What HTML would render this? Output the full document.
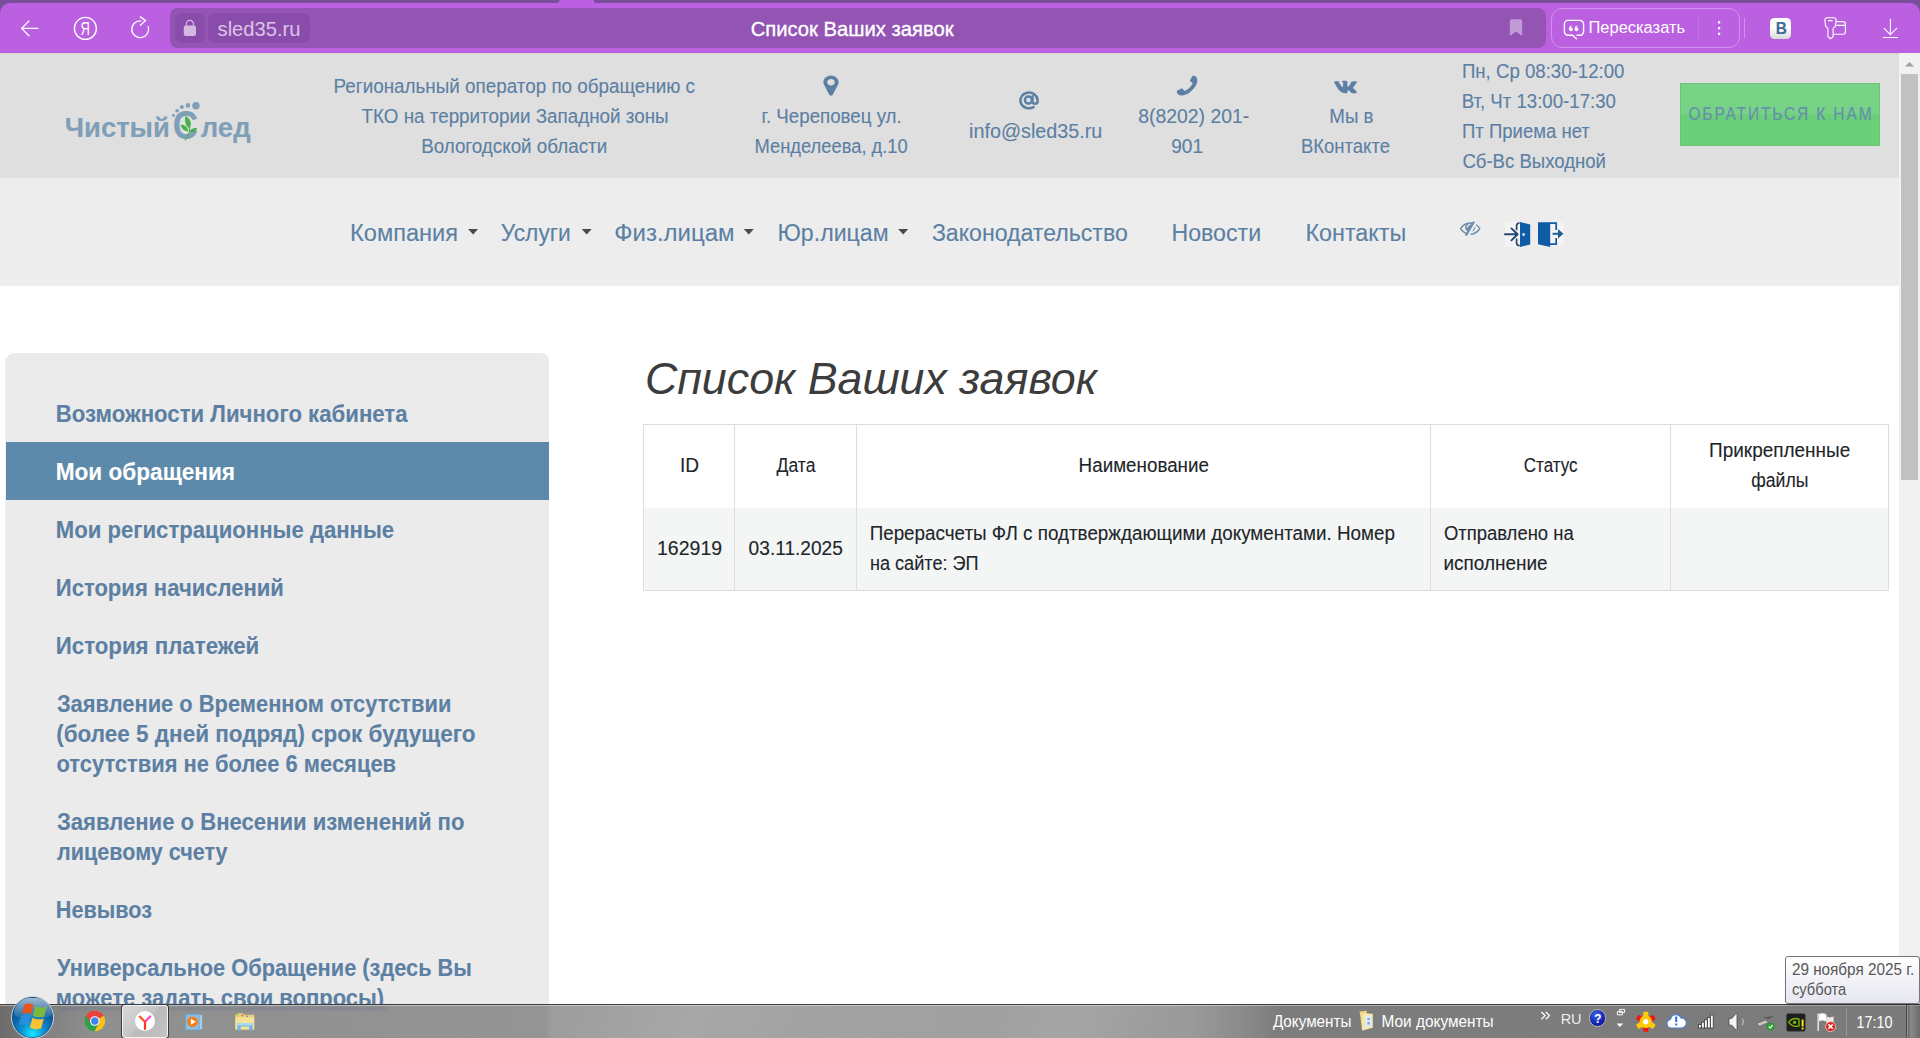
<!DOCTYPE html>
<html lang="ru"><head><meta charset="utf-8"><title>Список Ваших заявок</title>
<style>
*{box-sizing:border-box;margin:0;padding:0}
html,body{width:1920px;height:1038px;overflow:hidden;background:#fff}
body{position:relative;font-family:"Liberation Sans",sans-serif;-webkit-font-smoothing:antialiased}
.t{position:absolute;-webkit-text-stroke:.12px currentColor;white-space:nowrap;line-height:1;transform-origin:0 50%;display:block;font-weight:400;text-decoration:none}
.a{position:absolute;display:block}
svg.a{overflow:visible}
table{border-collapse:collapse}
ul{list-style:none}
</style></head>
<body>
<div class="a" style="left:0;top:0;width:1920px;height:53px;background:#7b4e9b">
<div class="a" style="left:0px;top:3px;width:1920px;height:50px;background:#ba60e1;border-radius:10px 10px 0 0"></div>
<svg class="a" style="left:550px;top:0px;" width="54" height="4" viewBox="550 0 54 4"><path fill="#ba60e1" d="M555 4 Q559 4 559.5 0 L593.5 0 Q594 4 598 4 Z M554 3h45v1h-45z"/></svg>
<div class="a" style="left:170px;top:8px;width:1376px;height:40px;background:#9354b4;border-radius:8px"></div>
<div class="a" style="left:175px;top:13px;width:30px;height:30px;background:#8a4cab;border-radius:7px"></div>
<div class="a" style="left:208px;top:13px;width:101.5px;height:30px;background:#8a4cab;border-radius:8px"></div>
<svg class="a" style="left:16px;top:16px;" width="28" height="26" viewBox="16 16 28 26"><path d="M29 21 L21.6 28.4 L29 35.8 M21.6 28.4 H38" fill="none" stroke="#fff" stroke-width="1.3" stroke-linecap="round" stroke-linejoin="round"/></svg>
<svg class="a" style="left:72px;top:15px;" width="28" height="28" viewBox="72 15 28 28"><circle cx="85.4" cy="28.4" r="11" fill="none" stroke="#fff" stroke-width="1.3"/></svg>
<span class="t" id="c_ya" style="left:80px;top:20px;font-size:18.20px;color:#fff;transform:translateX(0.55px) scaleX(0.7135);-webkit-text-stroke:0;">Я</span>
<svg class="a" style="left:128px;top:14px;" width="26" height="28" viewBox="128 14 26 28"><path d="M140.8 20.8 A8.4 8.4 0 1 0 148.2 26.6" fill="none" stroke="#fff" stroke-width="1.3" stroke-linecap="round"/><path d="M140.3 16.9 L145.6 20.6 L140.3 25.3" fill="none" stroke="#fff" stroke-width="1.3" stroke-linecap="round" stroke-linejoin="round"/></svg>
<svg class="a" style="left:180px;top:17px;" width="20" height="23" viewBox="180 17 20 23"><path d="M186.3 26 V24 a3.6 3.6 0 0 1 7.2 0 V26" fill="none" stroke="#d4b9e2" stroke-width="1.2"/><rect x="183.8" y="25.6" width="12.2" height="10.4" rx="2" fill="#d4b9e2"/></svg>
<span class="t" id="c_url" style="left:217px;top:19px;font-size:20.40px;color:#dcc4e8;transform:translateX(0.56px) scaleX(0.9882);-webkit-text-stroke:0;">sled35.ru</span>
<span class="t" id="c_title" style="left:750px;top:19px;font-size:20.80px;color:#fff;transform:translateX(0.69px) scaleX(0.9719);-webkit-text-stroke:.35px #fff;">Список Ваших заявок</span>
<svg class="a" style="left:1508px;top:18px;" width="16" height="20" viewBox="1508 18 16 20"><path d="M1509.8 21.2 a2 2 0 0 1 2 -2 h8.4 a2 2 0 0 1 2 2 V36.1 l-6.2 -4.6 l-6.2 4.6 Z" fill="#c19bd8"/></svg>
<div class="a" style="left:1551px;top:8px;width:188.5px;height:39.5px;background:transparent;border:1px solid rgba(255,255,255,.32);border-radius:11px"></div>
<svg class="a" style="left:1562px;top:18px;" width="24" height="23" viewBox="1562 18 24 23"><path d="M1568 20.4 h12 a3.6 3.6 0 0 1 3.6 3.6 v7.6 a3.6 3.6 0 0 1 -3.6 3.6 h-3 M1573 35.2 h-5 a3.6 3.6 0 0 1 -3.6 -3.6 v-7.6 a3.6 3.6 0 0 1 3.6 -3.6 M1572.6 35.2 l3.8 3.6" fill="none" stroke="#fff" stroke-width="1.4" stroke-linecap="round"/><path d="M1569 29.4 q0 -3.6 3.2 -4.2 q-1.2 1 -1.2 2.2 a1.9 1.9 0 1 1 -2 2 Z M1574.6 29.4 q0 -3.6 3.2 -4.2 q-1.2 1 -1.2 2.2 a1.9 1.9 0 1 1 -2 2 Z" fill="#fff"/></svg>
<span class="t" id="c_retell" style="left:1588px;top:20px;font-size:16.80px;color:#fff;transform:translateX(0.47px) scaleX(0.9818);-webkit-text-stroke:0;">Пересказать</span>
<div class="a" style="left:1697.5px;top:17px;width:1px;height:22px;background:rgba(255,255,255,.14);"></div>
<svg class="a" style="left:1716px;top:20px;" width="6" height="17" viewBox="1716 20 6 17"><path d="M1718 21.2h2.2v2.2h-2.2z M1718 27h2.2v2.2h-2.2z M1718 32.8h2.2v2.2h-2.2z" fill="#fff"/></svg>
<div class="a" style="left:1744.2px;top:18px;width:1px;height:20px;background:rgba(255,255,255,.3);"></div>
<div class="a" style="left:1770px;top:18px;width:21px;height:21px;background:linear-gradient(#fff 45%,#d9d9d9);border-radius:4.5px"></div>
<span class="t" id="c_vk" style="left:1775px;top:20px;font-size:16.40px;color:#3d6898;font-weight:700;transform:translateX(0.63px) scaleX(0.9366);">В</span>
<svg class="a" style="left:1822px;top:15px;" width="26" height="26" viewBox="1822 15 26 26"><path d="M1826.4 17.8 h7.6 a2.2 2.2 0 0 1 2.2 2.4 l-0.9 6.2 l-2.2 2 v8.4 l-2.6 2 l-2.6 -2 v-8.4 l-2.2 -2 l-0.9 -6.2 a2.2 2.2 0 0 1 2.2 -2.4 Z M1828 20.6 h4.6 M1836.6 21.6 h6.4 a2.4 2.4 0 0 1 2.4 2.4 v7.8 a2.4 2.4 0 0 1 -2.4 2.4 h-9.6 M1836.4 25.4 h9" fill="none" stroke="#fff" stroke-width="1.1" stroke-linejoin="round"/></svg>
<svg class="a" style="left:1880px;top:17px;" width="20" height="23" viewBox="1880 17 20 23"><path d="M1890.4 19.4 V34.4 M1884.2 28.4 l6.2 6.2 l6.2 -6.2 M1883.2 37.5 H1897.6" fill="none" stroke="#fff" stroke-width="1.1" stroke-linecap="round" stroke-linejoin="round"/></svg>
</div>
<header>
<div class="a" style="left:0px;top:53px;width:1899px;height:125px;background:#dfdfdf;"></div>
<div class="a" style="left:0px;top:53px;width:1899px;height:1px;background:#d6d8d3;"></div>
<a class="logo">
<span class="t" id="lg1" style="left:64px;top:115px;font-size:27.00px;color:#7f9eb8;font-weight:700;transform:translateX(0.77px) scaleX(1.0163);">Чистый</span>
<span class="t" id="lg2" style="left:172px;top:105px;font-size:41.00px;color:#7f9eb8;font-weight:700;transform:translateX(0.82px) scaleX(0.8554);">С</span>
<span class="t" id="lg3" style="left:200px;top:115px;font-size:27.00px;color:#7f9eb8;font-weight:700;transform:translateX(0.69px) scaleX(1.0202);">лед</span>
<svg class="a" style="left:170px;top:100px;" width="32" height="42" viewBox="170 100 32 42"><g fill="#7f9eb8"><circle cx="173.5" cy="115.2" r="1.5"/><circle cx="177.1" cy="110.8" r="1.8"/><circle cx="181.9" cy="107.1" r="2"/><circle cx="187.9" cy="105.4" r="2.3"/><circle cx="195.9" cy="105.7" r="3.7"/></g><g fill="#45b04c"><path d="M185.3 116.2 C190.6 118 192.2 123.6 189.6 128.6 C185.6 126.2 184.4 121 185.3 116.2 Z"/><path d="M180.6 124.8 C184.4 124.4 187.8 126.8 188.4 131.2 C184.6 131.4 181.6 128.8 180.6 124.8 Z"/><path d="M197.2 128.2 C195.6 131.6 192.2 132.8 189.4 132.2 C190.6 129 193.8 127.6 197.2 128.2 Z"/><path d="M189.2 127.6 C189.4 132 187.4 136.4 184.4 140.2 L185.4 140.6 C188.6 136.8 190.4 132.2 190.2 127.6 Z"/></g></svg>
</a>
<p>
<span class="t" id="h1a" style="left:333px;top:77px;font-size:19.40px;color:#5c80a3;transform:translateX(0.59px) scaleX(0.9716);">Региональный оператор по обращению с</span>
<span class="t" id="h1b" style="left:361px;top:107px;font-size:19.40px;color:#5c80a3;transform:translateX(0.57px) scaleX(0.9706);">ТКО на территории Западной зоны</span>
<span class="t" id="h1c" style="left:421px;top:137px;font-size:19.40px;color:#5c80a3;transform:translateX(0.14px) scaleX(0.9696);">Вологодской области</span>
</p>
<svg class="a" style="left:822px;top:75px;" width="18" height="21" viewBox="822 75 18 21"><path fill="#5c80a3" d="M834.8 82.27C834.8 84.1 833.09 85.6 831 85.6C828.91 85.6 827.2 84.1 827.2 82.27C827.2 80.43 828.91 78.93 831 78.93C833.09 78.93 834.8 80.43 834.8 82.27ZM838.6 82.27C838.6 78.58 835.2 75.6 831 75.6C826.8 75.6 823.4 78.58 823.4 82.27C823.4 83.06 823.5 83.88 823.89 84.6L829.31 94.68C829.6 95.25 830.29 95.6 831 95.6C831.71 95.6 832.4 95.25 832.71 94.68L838.11 84.6C838.5 83.88 838.6 83.06 838.6 82.27Z"/></svg>
<span class="t" id="h2a" style="left:761px;top:107px;font-size:19.40px;color:#5c80a3;transform:translateX(0.40px) scaleX(0.9654);">г. Череповец ул.</span>
<span class="t" id="h2b" style="left:754px;top:137px;font-size:19.40px;color:#5c80a3;transform:translateX(0.49px) scaleX(0.9455);">Менделеева, д.10</span>
<svg class="a" style="left:1018px;top:90px;" width="22" height="21" viewBox="1018 90 22 21"><g fill="none" stroke="#5c80a3" stroke-width="2.5" stroke-linecap="round"><path d="M1033.6 107.1 A8.6 7.9 0 1 1 1037.6 100.1 V101.3 A2.55 2.55 0 0 1 1032.5 101.3 V96.3"/><circle cx="1028.4" cy="100.1" r="3.5"/></g></svg>
<span class="t" id="h3" style="left:969px;top:122px;font-size:19.40px;color:#5c80a3;transform:translateX(0.07px) scaleX(1.0193);">info@sled35.ru</span>
<svg class="a" style="left:1176px;top:75px;" width="22" height="21" viewBox="1176 75 22 21"><path fill="#5c80a3" d="M1176.8 91.4C1176.8 91.3 1176.8 91.2 1176.84 91.1C1176.95 90.8 1177.66 90.49 1177.96 90.34C1178.79 89.89 1179.64 89.45 1180.46 88.98C1180.84 88.75 1181.31 88.33 1181.76 88.33C1182.65 88.33 1183.95 90.9 1184.74 90.9C1185.14 90.9 1185.65 90.54 1186 90.34C1188.67 88.91 1190.51 87.12 1191.99 84.53C1192.19 84.19 1192.56 83.7 1192.56 83.31C1192.56 82.55 1189.91 81.28 1189.91 80.42C1189.91 79.97 1190.35 79.52 1190.58 79.15C1191.06 78.36 1191.52 77.53 1191.99 76.72C1192.13 76.44 1192.45 75.74 1192.76 75.64C1192.86 75.6 1192.97 75.6 1193.07 75.6C1193.6 75.6 1194.62 75.83 1195.1 76.04C1195.82 76.34 1196.29 77.13 1196.65 77.77C1197.12 78.61 1197.4 79.46 1197.4 80.42C1197.4 81.74 1196.84 82.93 1196.39 84.14C1196.07 85 1195.67 85.84 1195.18 86.62C1193.64 89.04 1190.64 91.95 1188.15 93.44C1187.35 93.92 1186.49 94.31 1185.59 94.62C1184.35 95.06 1183.12 95.6 1181.76 95.6C1180.78 95.6 1179.9 95.33 1179.04 94.88C1178.38 94.52 1177.56 94.07 1177.25 93.37C1177.03 92.9 1176.8 91.91 1176.8 91.4Z"/></svg>
<span class="t" id="h4a" style="left:1138px;top:107px;font-size:19.40px;color:#5c80a3;transform:translateX(0.15px) scaleX(1.0001);">8(8202) 201-</span>
<span class="t" id="h4b" style="left:1171px;top:137px;font-size:19.40px;color:#5c80a3;transform:translateX(0.14px) scaleX(0.9867);">901</span>
<svg class="a" style="left:1334px;top:80px;" width="23" height="14" viewBox="1334 80 23 14"><path fill="#5c80a3" d="M1356.77 81.7C1356.77 81.7 1356.6 81.24 1355.58 81.37L1352.19 81.39C1351.93 81.36 1351.74 81.46 1351.74 81.46C1351.74 81.46 1351.54 81.56 1351.45 81.81C1350.9 83.18 1350.19 84.36 1350.19 84.36C1348.68 86.82 1348.07 86.96 1347.83 86.8C1347.25 86.45 1347.4 85.37 1347.4 84.6C1347.4 82.21 1347.78 81.21 1346.66 80.95C1346.3 80.87 1346.03 80.81 1345.07 80.8C1343.86 80.79 1342.84 80.8 1342.26 81.07C1341.87 81.26 1341.58 81.66 1341.75 81.69C1341.98 81.72 1342.48 81.82 1342.75 82.17C1342.75 82.17 1343.05 82.64 1343.1 83.65C1343.22 86.47 1342.62 86.82 1342.62 86.82C1342.17 87.06 1341.37 86.66 1340.19 84.33C1340.19 84.33 1339.51 83.18 1338.98 81.91C1338.88 81.67 1338.69 81.55 1338.69 81.55C1338.69 81.55 1338.48 81.39 1338.18 81.35L1334.95 81.37C1334.46 81.37 1334.28 81.58 1334.28 81.58C1334.28 81.58 1334.11 81.76 1334.27 82.14C1336.79 87.83 1339.66 90.68 1339.66 90.68C1339.66 90.68 1342.28 93.32 1345.26 93.14H1346.61C1347.03 93.1 1347.24 92.89 1347.24 92.89C1347.24 92.89 1347.43 92.68 1347.41 92.31C1347.39 90.57 1348.24 90.31 1348.24 90.31C1349.06 90.06 1350.12 91.99 1351.25 92.74C1351.25 92.74 1352.11 93.31 1352.76 93.18L1355.77 93.14C1357.36 93.13 1356.6 91.86 1356.6 91.86C1356.54 91.76 1356.17 90.98 1354.36 89.36C1352.47 87.67 1352.72 87.94 1355 85.02C1356.39 83.25 1356.94 82.16 1356.77 81.7Z"/></svg>
<span class="t" id="h5a" style="left:1329px;top:107px;font-size:19.40px;color:#5c80a3;transform:translateX(0.35px) scaleX(0.9659);">Мы в</span>
<span class="t" id="h5b" style="left:1300px;top:137px;font-size:19.40px;color:#5c80a3;transform:translateX(0.90px) scaleX(0.9542);">ВКонтакте</span>
<span class="t" id="h6a" style="left:1461px;top:62px;font-size:19.40px;color:#5c80a3;transform:translateX(0.91px) scaleX(0.9612);">Пн, Ср 08:30-12:00</span>
<span class="t" id="h6b" style="left:1461px;top:92px;font-size:19.40px;color:#5c80a3;transform:translateX(0.66px) scaleX(0.9612);">Вт, Чт 13:00-17:30</span>
<span class="t" id="h6c" style="left:1461px;top:122px;font-size:19.40px;color:#5c80a3;transform:translateX(0.91px) scaleX(0.9564);">Пт Приема нет</span>
<span class="t" id="h6d" style="left:1462px;top:152px;font-size:19.40px;color:#5c80a3;transform:translateX(0.38px) scaleX(0.9578);">Сб-Вс Выходной</span>
<div class="a" style="left:1680px;top:83px;width:200px;height:63px;background:linear-gradient(#78d387 0,#76d285 49%,#6bce79 51%,#6ccf7a 100%);border:1px solid #66c873"></div>
<a class="t" id="btn" style="left:1688px;top:105px;font-size:18.60px;color:#648fae;letter-spacing:2.20px;transform:translateX(0.43px) scaleX(0.8364);">ОБРАТИТЬСЯ К НАМ</a>
</header>
<nav>
<div class="a" style="left:0px;top:178px;width:1899px;height:108px;background:#ededed;"></div>
<a class="t" id="n1" style="left:350px;top:221px;font-size:24.83px;color:#5c80a3;transform:translateX(0.04px) scaleX(0.9507);">Компания</a>
<a class="t" id="n2" style="left:500px;top:221px;font-size:24.83px;color:#5c80a3;transform:translateX(0.70px) scaleX(0.9189);">Услуги</a>
<a class="t" id="n3" style="left:614px;top:221px;font-size:24.83px;color:#5c80a3;transform:translateX(0.24px) scaleX(0.9663);">Физ.лицам</a>
<a class="t" id="n4" style="left:777px;top:221px;font-size:24.83px;color:#5c80a3;transform:translateX(0.50px) scaleX(0.9317);">Юр.лицам</a>
<a class="t" id="n5" style="left:931px;top:221px;font-size:24.83px;color:#5c80a3;transform:translateX(0.91px) scaleX(0.9306);">Законодательство</a>
<a class="t" id="n6" style="left:1171px;top:221px;font-size:24.83px;color:#5c80a3;transform:translateX(0.47px) scaleX(0.9325);">Новости</a>
<a class="t" id="n7" style="left:1305px;top:221px;font-size:24.83px;color:#5c80a3;transform:translateX(0.43px) scaleX(0.9396);">Контакты</a>
<svg class="a" style="left:460px;top:225px;" width="452" height="13" viewBox="460 225 452 13"><g fill="#4a4a4a"><path d="M468.1 229.1 h10 l-5 5.3 z"/><path d="M581.7 229.1 h10 l-5 5.3 z"/><path d="M743.8 229.1 h10 l-5 5.3 z"/><path d="M898.2 229.1 h10 l-5 5.3 z"/></g></svg>
<svg class="a" style="left:1459px;top:220px;" width="23" height="18" viewBox="1459 220 23 18"><path fill="#5c80a3" opacity="0.88" d="M1466.32 232.73C1464.31 231.86 1462.64 230.37 1461.46 228.6C1462.54 226.98 1464.02 225.59 1465.79 224.71C1465.34 225.46 1465.1 226.32 1465.1 227.19C1465.1 228.77 1465.89 230.25 1467.21 231.18ZM1470.75 224.37C1470.75 224.66 1470.5 224.9 1470.2 224.9C1468.9 224.9 1467.83 225.92 1467.83 227.19C1467.83 227.48 1467.58 227.72 1467.29 227.72C1466.99 227.72 1466.74 227.48 1466.74 227.19C1466.74 225.35 1468.3 223.84 1470.2 223.84C1470.5 223.84 1470.75 224.09 1470.75 224.37ZM1474.88 222.27C1474.88 222.15 1474.81 222.04 1474.7 221.97C1474.46 221.84 1473.39 221.2 1473.18 221.2C1473.05 221.2 1472.93 221.27 1472.86 221.38L1472.25 222.44C1471.58 222.32 1470.88 222.26 1470.2 222.26C1466 222.26 1462.48 224.49 1460.23 227.84C1460.08 228.06 1460 228.34 1460 228.6C1460 228.88 1460.08 229.14 1460.23 229.36C1461.54 231.34 1463.39 232.99 1465.6 233.96C1465.49 234.15 1465.1 234.74 1465.1 234.92C1465.1 235.05 1465.17 235.16 1465.28 235.23C1465.52 235.36 1466.6 236 1466.81 236C1466.93 236 1467.06 235.93 1467.13 235.82L1467.68 234.84C1470.09 230.69 1472.47 226.52 1474.87 222.37C1474.88 222.35 1474.88 222.29 1474.88 222.27ZM1475.3 227.19C1475.3 226.88 1475.27 226.57 1475.21 226.27L1472.02 231.79C1473.99 231.07 1475.3 229.24 1475.3 227.19ZM1480.4 228.6C1480.4 228.31 1480.32 228.08 1480.17 227.84C1479.28 226.42 1477.86 225.04 1476.45 224.13L1475.73 225.36C1477.02 226.22 1478.1 227.33 1478.94 228.6C1477.17 231.26 1474.36 233.21 1471.04 233.49L1470.2 234.94C1473.63 234.94 1476.7 233.43 1478.93 230.96C1479.38 230.46 1479.82 229.92 1480.17 229.36C1480.32 229.12 1480.4 228.89 1480.4 228.6Z"/></svg>
<svg class="a" style="left:1503px;top:220px;" width="63" height="29" viewBox="1503 220 63 29"><rect x="1505" y="222" width="16" height="25" fill="#fff" opacity=".4"/><rect x="1549" y="222.4" width="14.4" height="23.6" fill="#fff" opacity=".4"/><path d="M1505 234.3 H1517.4 M1511.4 228.4 L1517.6 234.3 L1511.4 240.4" fill="none" stroke="#24476f" stroke-width="1.9" stroke-linejoin="round" stroke-linecap="round"/><path d="M1519 223 q-2.6 0.4 -2.4 3 v3.4 M1516.6 239.2 v3.4 q-0.2 2.6 2.4 3" fill="none" stroke="#24476f" stroke-width="1.7" stroke-linecap="round"/><path d="M1520 222 L1530.2 224.6 V244.4 L1520 247 Z" fill="#0f5ba6"/><rect x="1522.4" y="233.2" width="2.4" height="2.6" fill="#cfe6fa"/><path d="M1538 222.2 L1550.2 222.2 L1550.2 247 L1538 244.2 Z" fill="#0f5ba6"/><path d="M1550 223.2 H1556.2 V230 M1556.2 238 V244.2 H1550" fill="none" stroke="#0f5ba6" stroke-width="1.7"/><path d="M1552.6 233.8 H1559" stroke="#1d5f96" stroke-width="2" fill="none"/><path d="M1558 229 L1563.4 233.8 L1558 238.6 Z" fill="#1d5f96"/></svg>
</nav>
<aside>
<div class="a" style="left:5px;top:358px;width:1px;height:646px;background:#f3f3f4;"></div>
<div class="a" style="left:6px;top:353px;width:543px;height:707px;background:#ebebeb;border-radius:8px"></div>
<div class="a" style="left:6px;top:442px;width:543px;height:58px;background:#5d8aab;"></div>
<ul>
<li><a class="t" id="s1" style="left:55px;top:402px;font-size:24.83px;color:#5c80a3;font-weight:700;transform:translateX(0.78px) scaleX(0.8939);">Возможности Личного кабинета</a>
<li><a class="t" id="s2" style="left:55px;top:460px;font-size:24.83px;color:#fff;font-weight:700;transform:translateX(0.76px) scaleX(0.9097);">Мои обращения</a>
<li><a class="t" id="s3" style="left:55px;top:518px;font-size:24.83px;color:#5c80a3;font-weight:700;transform:translateX(0.78px) scaleX(0.8912);">Мои регистрационные данные</a>
<li><a class="t" id="s4" style="left:55px;top:576px;font-size:24.83px;color:#5c80a3;font-weight:700;transform:translateX(0.79px) scaleX(0.8879);">История начислений</a>
<li><a class="t" id="s5" style="left:55px;top:634px;font-size:24.83px;color:#5c80a3;font-weight:700;transform:translateX(0.77px) scaleX(0.8963);">История платежей</a>
<li><a class="t" id="s6a" style="left:56px;top:692px;font-size:24.83px;color:#5c80a3;font-weight:700;transform:translateX(0.91px) scaleX(0.8808);">Заявление о Временном отсутствии</a>
<a class="t" id="s6b" style="left:56px;top:722px;font-size:24.83px;color:#5c80a3;font-weight:700;transform:translateX(0.23px) scaleX(0.9058);">(более 5 дней подряд) срок будущего</a>
<a class="t" id="s6c" style="left:56px;top:752px;font-size:24.83px;color:#5c80a3;font-weight:700;transform:translateX(0.47px) scaleX(0.8826);">отсутствия не более 6 месяцев</a>
<li><a class="t" id="s7a" style="left:56px;top:810px;font-size:24.83px;color:#5c80a3;font-weight:700;transform:translateX(0.90px) scaleX(0.8897);">Заявление о Внесении изменений по</a>
<a class="t" id="s7b" style="left:57px;top:840px;font-size:24.83px;color:#5c80a3;font-weight:700;transform:translateX(0.12px) scaleX(0.8681);">лицевому счету</a>
<li><a class="t" id="s8" style="left:55px;top:898px;font-size:24.83px;color:#5c80a3;font-weight:700;transform:translateX(0.82px) scaleX(0.8718);">Невывоз</a>
<li><a class="t" id="s9a" style="left:57px;top:956px;font-size:24.83px;color:#5c80a3;font-weight:700;transform:translateX(0.09px) scaleX(0.8775);">Универсальное Обращение (здесь Вы</a>
<a class="t" id="s9b" style="left:55px;top:986px;font-size:24.83px;color:#5c80a3;font-weight:700;transform:translateX(0.80px) scaleX(0.8859);">можете задать свои вопросы)</a>
</ul></aside>
<main>
<h1 class="t" id="ttl" style="left:644px;top:357px;font-size:44.00px;color:#3c3c3c;font-style:italic;transform:translateX(0.90px) scaleX(1.0175);-webkit-text-stroke:0;">Список Ваших заявок</h1>
<div class="a" style="left:643px;top:424px;width:1246px;height:167px;background:#fff;border:1px solid #dddddd"></div>
<div class="a" style="left:644px;top:508px;width:1244px;height:82px;background:#f4f6f6;"></div>
<div class="a" style="left:734px;top:424px;width:1px;height:167px;background:#dddddd;"></div>
<div class="a" style="left:856px;top:424px;width:1px;height:167px;background:#dddddd;"></div>
<div class="a" style="left:1430px;top:424px;width:1px;height:167px;background:#dddddd;"></div>
<div class="a" style="left:1670px;top:424px;width:1px;height:167px;background:#dddddd;"></div>
<table><thead><tr>
<th><span class="t" id="th1" style="left:679px;top:456px;font-size:19.40px;color:#212529;transform:translateX(0.91px) scaleX(0.9851);">ID</span></th>
<th><span class="t" id="th2" style="left:776px;top:456px;font-size:19.40px;color:#212529;transform:translateX(0.56px) scaleX(0.9056);">Дата</span></th>
<th><span class="t" id="th3" style="left:1078px;top:456px;font-size:19.40px;color:#212529;transform:translateX(0.59px) scaleX(0.9700);">Наименование</span></th>
<th><span class="t" id="th4" style="left:1523px;top:456px;font-size:19.40px;color:#212529;transform:translateX(0.81px) scaleX(0.8759);">Статус</span></th>
<th><span class="t" id="th5a" style="left:1709px;top:441px;font-size:19.40px;color:#212529;transform:translateX(0.07px) scaleX(0.9778);">Прикрепленные</span><span class="t" id="th5b" style="left:1751px;top:471px;font-size:19.40px;color:#212529;transform:translateX(0.26px) scaleX(0.9093);">файлы</span></th>
</tr></thead><tbody><tr>
<td><span class="t" id="td1" style="left:656px;top:539px;font-size:19.40px;color:#212529;transform:translateX(0.99px) scaleX(1.0063);">162919</span></td>
<td><span class="t" id="td2" style="left:748px;top:539px;font-size:19.40px;color:#212529;transform:translateX(0.61px) scaleX(0.9860);">03.11.2025</span></td>
<td><span class="t" id="td3a" style="left:869px;top:524px;font-size:19.40px;color:#212529;transform:translateX(0.64px) scaleX(0.9712);">Перерасчеты ФЛ с подтверждающими документами. Номер</span><span class="t" id="td3b" style="left:869px;top:554px;font-size:19.40px;color:#212529;transform:translateX(0.93px) scaleX(0.9341);">на сайте: ЭП</span></td>
<td><span class="t" id="td4a" style="left:1443px;top:524px;font-size:19.40px;color:#212529;transform:translateX(0.89px) scaleX(0.9519);">Отправлено на</span><span class="t" id="td4b" style="left:1443px;top:554px;font-size:19.40px;color:#212529;transform:translateX(0.39px) scaleX(0.9783);">исполнение</span></td>
<td></td></tr></tbody></table>
</main>
<div class="a" style="left:1899px;top:53px;width:21px;height:951px;background:#f1f1f1;"></div>
<div class="a" style="left:1901px;top:74px;width:17px;height:405.5px;background:#c1c1c1;"></div>
<svg class="a" style="left:1904px;top:58px;" width="12" height="10" viewBox="1904 58 12 10"><path d="M1905 66.6 l4.5 -4.6 l4.5 4.6 z" fill="#a0a0a0"/></svg>
<footer>
<div class="a" style="left:0px;top:1004px;width:1920px;height:34px;background:linear-gradient(115deg,rgba(255,255,255,0) 0,rgba(255,255,255,0) 30%,rgba(255,255,255,.07) 36%,rgba(255,255,255,0) 42%,rgba(255,255,255,0) 52%,rgba(255,255,255,.06) 56%,rgba(255,255,255,0) 61%),linear-gradient(90deg,#6b6b6b 0,#7e7e7e 2%,#8f8f8f 5%,#949494 28.4%,#9e9e9e 28.8%,#a2a2a2 40%,#a0a0a0 55%,#9a9a9a 62%,#8c8c8c 64.5%,#7d7d7d 66.5%,#7b7b7b 100%);border-top:1px solid #3d3d3d;box-shadow:inset 0 1px 0 rgba(255,255,255,.42)"></div>
<div class="a" style="left:58px;top:1006.5px;width:328px;height:3px;background:rgba(60,85,120,.2);filter:blur(1.6px)"></div>
<div class="a" style="left:11.3px;top:995.5px;width:43.2px;height:43.2px;background:radial-gradient(circle at 50% 90%,#19e6ff 0,#0d8fd0 28%,#0b5a9c 58%,#0a4a84 100%);border-radius:50%;border:.8px solid #c9d3da;box-shadow:inset 0 0 0 .8px #0b4f8a"></div>
<div class="a" style="left:14.4px;top:997.6px;width:37.2px;height:20px;background:linear-gradient(rgba(255,255,255,.6),rgba(255,255,255,.08));border-radius:19px 19px 50% 50%/19px 19px 22% 22%"></div>
<svg class="a" style="left:10px;top:994px;" width="46" height="44" viewBox="10 994 46 44"><path d="M24.3 1004.6 q4.6 -2.4 9.2 0.2 l-2.2 9.4 q-4.6 -2.6 -9.2 -0.2 z" fill="#e8541c"/><path d="M35.4 1006.2 q5.2 2.6 11.4 0.4 l-2.6 9.8 q-5.6 2.2 -11.2 -0.6 z" fill="#7cb93c"/><path d="M21.4 1016 q4.6 -2.4 9.2 0.2 l-2.4 9.6 q-4.8 -2.6 -9.6 -0.2 z" fill="#2a90dc"/><path d="M32.4 1017.8 q5.4 2.8 11.4 0.6 l-2.6 9.8 q-5.6 2.2 -11.4 -0.8 z" fill="#fbc232"/></svg>
<svg class="a" style="left:84px;top:1010px;" width="22" height="22" viewBox="84 1010 22 22"><circle cx="94.8" cy="1021" r="10.2" fill="#fbc116"/><path d="M94.8 1021 L85.97 1015.9 A10.2 10.2 0 0 1 103.63 1015.9 Z" fill="#e9433a"/><path d="M94.8 1021 L103.63 1015.9 A10.2 10.2 0 0 1 94.8 1031.2 Z" fill="#fbc116"/><path d="M94.8 1021 L94.8 1031.2 A10.2 10.2 0 0 1 85.97 1015.9 Z" fill="#2ca24e"/><path d="M94.8 1016.2 H103.8 A10.2 10.2 0 0 0 85.97 1015.9 L90.6 1023.4 Z" fill="#e9433a"/><path d="M98.96 1023.4 L94.4 1031.2 A10.2 10.2 0 0 1 85.97 1015.9 L90.64 1023.4 Z" fill="#2ca24e"/><circle cx="94.8" cy="1021" r="4.8" fill="#fff"/><circle cx="94.8" cy="1021" r="3.7" fill="#3f82f0"/></svg>
<div class="a" style="left:122px;top:1005px;width:46.2px;height:32.5px;background:linear-gradient(135deg,#d8d8d8 0,#c6c6c6 45%,#bababa 55%,#c4c4c4 100%);border:1px solid #f4f4f4;border-radius:3px;box-shadow:0 0 0 1px #3a3a3a"></div>
<svg class="a" style="left:134px;top:1010px;" width="22" height="22" viewBox="134 1010 22 22"><circle cx="145" cy="1021" r="10" fill="#fff"/><path d="M145 1029 V1021.6" stroke="#ff3326" stroke-width="2.2" stroke-linecap="round" fill="none"/><path d="M145 1021.8 L139.8 1016.6" stroke="#ff5a1c" stroke-width="2.2" stroke-linecap="round" fill="none"/><path d="M145 1021.8 L150.2 1016.4" stroke="#ff4ac8" stroke-width="2.2" stroke-linecap="round" fill="none"/><circle cx="145" cy="1021.8" r="1.1" fill="#ff3c28"/></svg>
<svg class="a" style="left:185px;top:1013px;" width="19" height="18" viewBox="185 1013 19 18"><path d="M185.8 1014.4 h13.4 l3 1 v13.6 l-3 0.8 h-13.4 z" fill="#a5cdea"/><path d="M185.8 1014.4 h13.4 v15.4 h-13.4 z" fill="#8cbfe6" stroke="#5e9ed2" stroke-width=".7"/><circle cx="192.6" cy="1021.8" r="5.4" fill="#f57c14"/><path d="M190.9 1018.8 v6 l5 -3 z" fill="#fff"/></svg>
<svg class="a" style="left:234px;top:1012px;" width="22" height="20" viewBox="234 1012 22 20"><path d="M235.4 1015.2 l1 -2 h6.2 l1.6 1.6 h10 v14.6 h-18.8 z" fill="#e9cf78"/><path d="M235.4 1017.4 h18.8 v12 h-18.8 z" fill="#f5e299"/><rect x="236.6" y="1013.4" width="1.4" height="1.4" fill="#2ecc40"/><rect x="241.6" y="1014.8" width="1.4" height="1.4" fill="#e74c3c"/><rect x="246.6" y="1015.6" width="1.4" height="1.4" fill="#3498db"/><path d="M237.4 1024.4 q0 -1.4 1.4 -1.4 h12.4 q1.4 0 1.4 1.4 v6 h-3.4 v-4 h-8.4 v4 h-3.4 z" fill="#6fb7e6"/><path d="M237.4 1024.4 q0 -1.4 1.4 -1.4 h12.4 q1.4 0 1.4 1.4 v1.2 h-15.2 z" fill="#a9d9f5"/></svg>
<span class="t" id="tb1" style="left:1272px;top:1013px;font-size:16.20px;color:#fff;transform:translateX(0.88px) scaleX(0.9413);-webkit-text-stroke:0;">Документы</span>
<svg class="a" style="left:1358px;top:1010px;" width="17" height="21" viewBox="1358 1010 17 21"><path d="M1359.6 1011.4 l7 -0.6 l0.6 18.2 l-5 1.6 z" fill="#f0d77f"/><path d="M1362.2 1013 l10.6 0.8 l0 14 l-10.6 2.8 z" fill="#f7e7a6"/><path d="M1365 1015.4 l6.6 0.6 v10.6 l-6.6 1.6 z" fill="#dfeaf4"/><path d="M1367.4 1018 h2.4 v2 h-2.4z M1367.4 1022 h2.4 v2.4 h-2.4z" fill="#7aa7d6"/></svg>
<span class="t" id="tb2" style="left:1381px;top:1013px;font-size:16.20px;color:#fff;transform:translateX(0.53px) scaleX(0.9507);-webkit-text-stroke:0;">Мои документы</span>
<svg class="a" style="left:1540px;top:1011px;" width="11" height="9" viewBox="1540 1011 11 9"><path d="M1541.4 1012 l3.6 3.6 l-3.6 3.6 M1545.8 1012 l3.6 3.6 l-3.6 3.6" fill="none" stroke="#fff" stroke-width="1.3"/></svg>
<span class="t" id="tb3" style="left:1560px;top:1012px;font-size:14.60px;color:#eee;transform:translateX(0.64px) scaleX(0.9944);-webkit-text-stroke:0;">RU</span>
<div class="a" style="left:1588.9px;top:1009px;width:17.6px;height:17.6px;background:radial-gradient(circle at 40% 30%,#3f62e8 0,#1223b4 60%,#070b6a 100%);border-radius:50%;border:1px solid #b8b8b0"></div>
<span class="t" id="tbq" style="left:1594px;top:1012px;font-size:13.50px;color:#fff;font-weight:700;transform:translateX(0.22px) scaleX(0.8651);">?</span>
<svg class="a" style="left:1615px;top:1008px;" width="12" height="21" viewBox="1615 1008 12 21"><path d="M1619.6 1009.4 h5 v3 h-5 z M1617.4 1011.6 h5 v3.2 h-5 z" fill="none" stroke="#fff" stroke-width="1"/><path d="M1616.6 1023.6 h6.6 l-3.3 3.4 z" fill="#fff"/></svg>
<svg class="a" style="left:1634px;top:1010px;" width="24" height="24" viewBox="1634 1010 24 24"><rect x="1643.2" y="1011.8" width="5.2" height="7" rx=".8" fill="#ffc907" transform="rotate(0 1645.8 1021.8)"/><rect x="1643.2" y="1011.8" width="5.2" height="7" rx=".8" fill="#f5130f" transform="rotate(60 1645.8 1021.8)"/><rect x="1643.2" y="1011.8" width="5.2" height="7" rx=".8" fill="#ffc907" transform="rotate(120 1645.8 1021.8)"/><rect x="1643.2" y="1011.8" width="5.2" height="7" rx=".8" fill="#f5130f" transform="rotate(180 1645.8 1021.8)"/><rect x="1643.2" y="1011.8" width="5.2" height="7" rx=".8" fill="#ffc907" transform="rotate(240 1645.8 1021.8)"/><rect x="1643.2" y="1011.8" width="5.2" height="7" rx=".8" fill="#f5130f" transform="rotate(300 1645.8 1021.8)"/><circle cx="1645.8" cy="1021.8" r="6.3" fill="#ffc907"/><circle cx="1645.8" cy="1021.8" r="2.7" fill="#fff"/></svg>
<svg class="a" style="left:1665px;top:1012px;" width="23" height="18" viewBox="1665 1012 23 18"><path d="M1671 1028 a4.3 4.3 0 0 1 -0.6 -8.5 a5.6 5.6 0 0 1 10.6 -1.6 a5 5 0 0 1 0.6 10.1 z" fill="#fff" stroke="#4d7bd3" stroke-width="1.2"/><path d="M1675.2 1016.4 h2 v5.6 h-2z M1675.2 1023.4 h2 v2.2 h-2z" fill="#2b6fe0"/></svg>
<svg class="a" style="left:1697px;top:1013px;" width="19" height="17" viewBox="1697 1013 19 17"><rect x="1698.6" y="1024.6" width="2.6" height="3.4" fill="#fff" stroke="#3a3a3a" stroke-width=".8"/><rect x="1701.6" y="1022.2" width="2.6" height="5.8" fill="#fff" stroke="#3a3a3a" stroke-width=".8"/><rect x="1704.6" y="1019.8" width="2.6" height="8.2" fill="#fff" stroke="#3a3a3a" stroke-width=".8"/><rect x="1707.6" y="1017.4" width="2.6" height="10.6" fill="#fff" stroke="#3a3a3a" stroke-width=".8"/><rect x="1710.6" y="1015.0" width="2.6" height="13.0" fill="#fff" stroke="#3a3a3a" stroke-width=".8"/></svg>
<svg class="a" style="left:1727px;top:1011px;" width="21" height="21" viewBox="1727 1011 21 21"><path d="M1729 1018.4 h2.8 l4.2 -4.8 q0.8 -0.6 1 0.4 v15.6 q-0.2 1 -1 0.4 l-4.2 -4.8 h-2.8 z" fill="#f4f4f4" stroke="#4a4a4a" stroke-width=".8"/><path d="M1742.4 1018.6 q2 3 0 6.4" fill="none" stroke="#cfcfcf" stroke-width="1"/></svg>
<svg class="a" style="left:1755px;top:1012px;" width="22" height="20" viewBox="1755 1012 22 20"><path d="M1756.6 1023.6 l9 -3.6 l3 2.4 l-9 3.8 z" fill="#c8c8c8" stroke="#555" stroke-width=".6"/><path d="M1763 1017.4 l11.6 -1.6 l-6 3.4 z" fill="#5a5a5a"/><circle cx="1770.6" cy="1026.6" r="3.6" fill="#2fae3c" stroke="#1c7c28" stroke-width=".6"/><path d="M1768.8 1026.6 l1.4 1.4 l2.4 -2.8" fill="none" stroke="#fff" stroke-width="1.1"/></svg>
<svg class="a" style="left:1785px;top:1012px;" width="22" height="21" viewBox="1785 1012 22 21"><rect x="1786.4" y="1013.4" width="19" height="18" rx="2" fill="#1d1d1d" stroke="#555" stroke-width=".8"/><path d="M1788.6 1022.4 q4 -5.4 10.4 -3.2 v6.6 q-6 2 -10.4 -3.4 z" fill="none" stroke="#76b900" stroke-width="1.4"/><circle cx="1794.6" cy="1022.4" r="1.6" fill="#76b900"/><path d="M1801.6 1019.4 h2 v7 h-2z M1801.6 1027.6 h2 v2 h-2z" fill="#ffe600"/></svg>
<svg class="a" style="left:1815px;top:1011px;" width="25" height="23" viewBox="1815 1011 25 23"><path d="M1818.2 1013.4 v17.6" stroke="#f0f0f0" stroke-width="1.4"/><path d="M1819 1013.8 q4.4 -1.6 7.4 0.6 v7.2 q-3 -2 -7.4 -0.4 z" fill="#fff" stroke="#bbb" stroke-width=".5"/><path d="M1826.4 1016.6 q3.6 1.6 7.2 0 v6.6 q-3.6 1.6 -7.2 0 z" fill="#e8e8e8"/><circle cx="1830.6" cy="1026.6" r="5" fill="#e0261c" stroke="#fff" stroke-width=".6"/><path d="M1828.4 1024.4 l4.4 4.4 M1832.8 1024.4 l-4.4 4.4" stroke="#fff" stroke-width="1.5"/></svg>
<div class="a" style="left:1845.5px;top:1008px;width:1px;height:28px;background:rgba(255,255,255,.22);"></div>
<span class="t" id="tb4" style="left:1856px;top:1015px;font-size:15.60px;color:#fff;transform:translateX(0.48px) scaleX(0.9234);-webkit-text-stroke:0;">17:10</span>
<div class="a" style="left:1906px;top:1005px;width:14px;height:33px;background:linear-gradient(90deg,#5e5e5e,#8a8a8a 30%,#6a6a6a);border-left:1px solid #4a4a4a;box-shadow:inset 1px 1px 0 rgba(255,255,255,.3)"></div>
</footer>
<div class="a" style="left:1785.4px;top:956.2px;width:135px;height:47.6px;background:linear-gradient(#fff,#e5e6f0);border:1px solid #767676;border-radius:3px;box-shadow:1px 1px 2px rgba(0,0,0,.3)"></div>
<span class="t" id="tp1" style="left:1791px;top:962px;font-size:16.00px;color:#575757;transform:translateX(0.89px) scaleX(0.9555);-webkit-text-stroke:0;">29 ноября 2025 г.</span>
<span class="t" id="tp2" style="left:1791px;top:982px;font-size:16.00px;color:#575757;transform:translateX(0.92px) scaleX(0.9193);-webkit-text-stroke:0;">суббота</span>
</body></html>
